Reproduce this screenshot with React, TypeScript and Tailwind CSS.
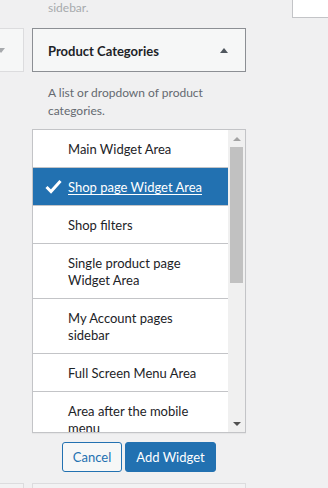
import React from "react";

const items: { label: string; selected?: boolean }[] = [
  { label: "Main Widget Area" },
  { label: "Shop page Widget Area", selected: true },
  { label: "Shop filters" },
  { label: "Single product page Widget Area" },
  { label: "My Account pages sidebar" },
  { label: "Full Screen Menu Area" },
  { label: "Area after the mobile menu" },
];

export default function App() {
  return (
    <div
      className="w-[328px] h-[488px] bg-[#f0f0f1] overflow-hidden relative text-[#1d2327]"
      style={{ fontFamily: 'Lato, "Noto Sans", sans-serif' }}
    >
      {/* top remnants */}
      <div className="flex h-[28px]">
        <div className="w-[48px]" />
        <div className="text-[12px] leading-[18px] text-[#a7aaad] -mt-[1px]">sidebar.</div>
        <div className="flex-1" />
        <div className="w-[36px] h-[18px] bg-white border-l border-b border-[#c3c4c7]" />
      </div>
      <div className="flex">
        {/* left cut widget */}
        <div className="w-[24px] shrink-0">
          <div className="h-[44px] bg-[#f6f7f7] border border-l-0 border-[#dcdcde] flex items-center">
            <span className="w-0 h-0 border-l-[4px] border-r-[4px] border-t-[5px] border-l-transparent border-r-transparent border-t-[#a7aaad] -translate-x-[3px]" />
          </div>
        </div>
        <div className="w-[8px] shrink-0" />
        {/* main column */}
        <div className="w-[214px] shrink-0">
          <div className="h-[44px] bg-[#f6f7f7] border border-[#8c8f94] flex items-center justify-between pl-[15px] pr-[17px]">
            <span className="text-[13px] font-bold text-[#1d2327] pt-[3px]">Product Categories</span>
            <span className="w-0 h-0 border-l-[4px] border-r-[4px] border-b-[5px] border-l-transparent border-r-transparent border-b-[#50575e]" />
          </div>
          <div className="pl-[16px] pr-[20px] pt-[12px] pb-[9px] text-[12px] leading-[18px] text-[#646970]">
            A list or dropdown of product categories.
          </div>
          <div className="h-[304px] bg-white border border-[#c3c4c7] flex overflow-hidden shadow-[0_1px_1px_rgba(0,0,0,0.04)]">
            <ul className="flex-1 overflow-hidden">
              {items.map((it) => (
                <li
                  key={it.label}
                  className={
                    "relative pl-[35px] pr-[14px] pt-[11px] pb-[9px] text-[13px] leading-[17px] border-b border-[#c3c4c7] " +
                    (it.selected ? "bg-[#2271b1] text-white" : "text-[#1d2327]")
                  }
                >
                  {it.selected && (
                    <svg
                      className="absolute left-[12px] top-[11px]"
                      width="17"
                      height="15"
                      viewBox="0 0 17 15"
                    >
                      <path d="M1.5 8 L6 12.5 L15.5 2" stroke="white" strokeWidth="3" fill="none" />
                    </svg>
                  )}
                  <span className={it.selected ? "underline underline-offset-[2px]" : ""}>{it.label}</span>
                </li>
              ))}
            </ul>
            <div className="w-[17px] bg-[#f0f0f0] flex flex-col items-center shrink-0">
              <div className="h-[17px] flex items-center justify-center">
                <span className="w-0 h-0 border-l-[4px] border-r-[4px] border-b-[4px] border-l-transparent border-r-transparent border-b-[#a3a3a3]" />
              </div>
              <div className="w-[13px] h-[136px] bg-[#c1c1c1]" />
              <div className="flex-1" />
              <div className="h-[17px] flex items-center justify-center">
                <span className="w-0 h-0 border-l-[4px] border-r-[4px] border-t-[4px] border-l-transparent border-r-transparent border-t-[#505050]" />
              </div>
            </div>
          </div>
          <div className="flex justify-center gap-[3px] mt-[9px]">
            <button className="h-[30px] w-[60px] rounded-[3px] border border-[#2271b1] bg-[#f6f7f7] text-[#2271b1] text-[13px] leading-[28px]">
              Cancel
            </button>
            <button className="h-[30px] w-[91px] rounded-[3px] border border-[#2271b1] bg-[#2271b1] text-white text-[13px] leading-[28px]">
              Add Widget
            </button>
          </div>
        </div>
      </div>
      {/* bottom remnants */}
      <div className="absolute left-0 top-[483px] flex">
        <div className="w-[24px] h-[10px] bg-[#f2f2f3] border border-l-0 border-[#dcdcde]" />
        <div className="w-[8px]" />
        <div className="w-[214px] h-[10px] bg-[#f2f2f3] border border-[#dcdcde]" />
      </div>
    </div>
  );
}
